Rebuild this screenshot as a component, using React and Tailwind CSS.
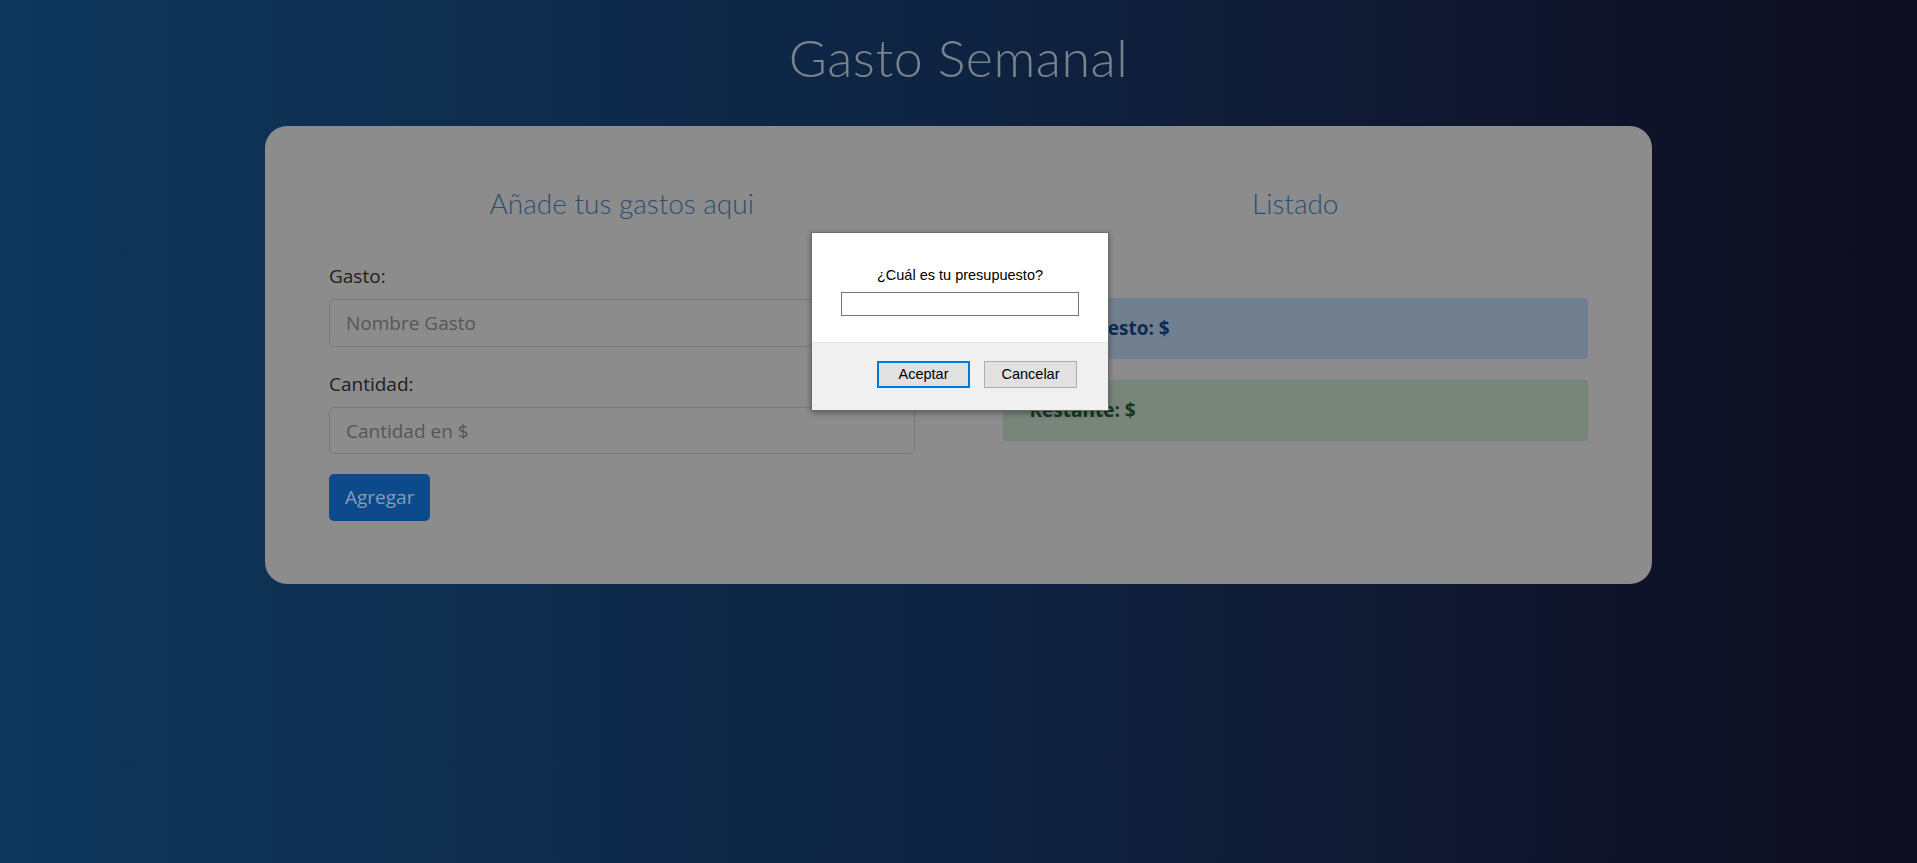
import React from 'react';

const PromptDialog = () => (
  <div className="absolute left-[811px] top-[232px] w-[298px] h-[179px] bg-white border border-[#6b6b6b] shadow-[0_2px_6px_rgba(0,0,0,0.35)] flex flex-col font-['Liberation_Sans',Arial,sans-serif] text-[14.5px] text-black">
    <div className="flex-1 flex flex-col items-center pt-[33px]">
      <p className="leading-[18px]">¿Cuál es tu presupuesto?</p>
      <input
        type="text"
        className="mt-[8px] w-[238px] h-[24px] border border-[#7a7a7a] bg-white outline-none"
      />
    </div>
    <div className="h-[68px] bg-[#f0f0f0] border-t border-[#e3e3e3] flex items-start justify-end gap-[14px] pt-[18px] pr-[31px]">
      <button className="w-[93px] h-[27px] bg-[#e1e1e1] border-2 border-[#0078d7] leading-none">Aceptar</button>
      <button className="w-[93px] h-[27px] bg-[#e1e1e1] border border-[#adadad] leading-none">Cancelar</button>
    </div>
  </div>
);

const App = () => {
  return (
    <div className="relative min-h-[863px] w-full bg-gradient-to-r from-[#0d375b] via-[#0e2342] to-[#0e0d1f] font-['Open_Sans',sans-serif]">
      <h1 className="pt-[25px] text-center text-[52px] leading-[64px] font-light text-[#7a838c] font-['Lato',sans-serif] tracking-[0.5px]">
        Gasto Semanal
      </h1>

      <div className="mx-[265px] mt-[37px] rounded-[22px] bg-[#8c8c8c] px-16 pt-[60px] pb-[63px]">
        <div className="grid grid-cols-2 gap-[88px]">
          <div>
            <h2 className="text-center text-[28px] leading-[34px] font-light text-[#2f4e70] font-['Lato',sans-serif]">
              Añade tus gastos aqui
            </h2>
            <form className="mt-[41px]">
              <label className="block text-[19px] leading-[30px] text-[#1e1e1e]">Gasto:</label>
              <input
                type="text"
                placeholder="Nombre Gasto"
                className="mt-[8px] w-full h-[48px] rounded-[5px] border border-[#7a7a7a] bg-transparent px-[16px] text-[19px] placeholder:text-[#565656] outline-none"
              />
              <label className="block mt-[22px] text-[19px] leading-[30px] text-[#1e1e1e]">Cantidad:</label>
              <input
                type="text"
                placeholder="Cantidad en $"
                className="mt-[8px] w-full h-[47px] rounded-[5px] border border-[#7a7a7a] bg-transparent px-[16px] text-[19px] placeholder:text-[#565656] outline-none"
              />
              <button
                type="button"
                className="mt-[20px] h-[47px] px-[16px] rounded-[5px] bg-[#0d4a8c] text-[19px] text-[#8b9bb0]"
              >
                Agregar
              </button>
            </form>
          </div>

          <div>
            <h2 className="text-center text-[28px] leading-[34px] font-light text-[#2f4e70] font-['Lato',sans-serif]">
              Listado
            </h2>
            <div className="mt-[78px] flex flex-col gap-[21px]">
              <div className="h-[61px] flex items-center px-[26px] rounded-[4px] bg-[#727f8e] border border-[#6a7d96] text-[#0b2b55] text-[19px] font-bold">
                Presupuesto: $
              </div>
              <div className="h-[61px] flex items-center px-[26px] rounded-[4px] bg-[#77857a] border border-[#6f8573] text-[#10391f] text-[19px] font-bold">
                Restante: $
              </div>
            </div>
          </div>
        </div>
      </div>

      <PromptDialog />
    </div>
  );
};

export default App;
